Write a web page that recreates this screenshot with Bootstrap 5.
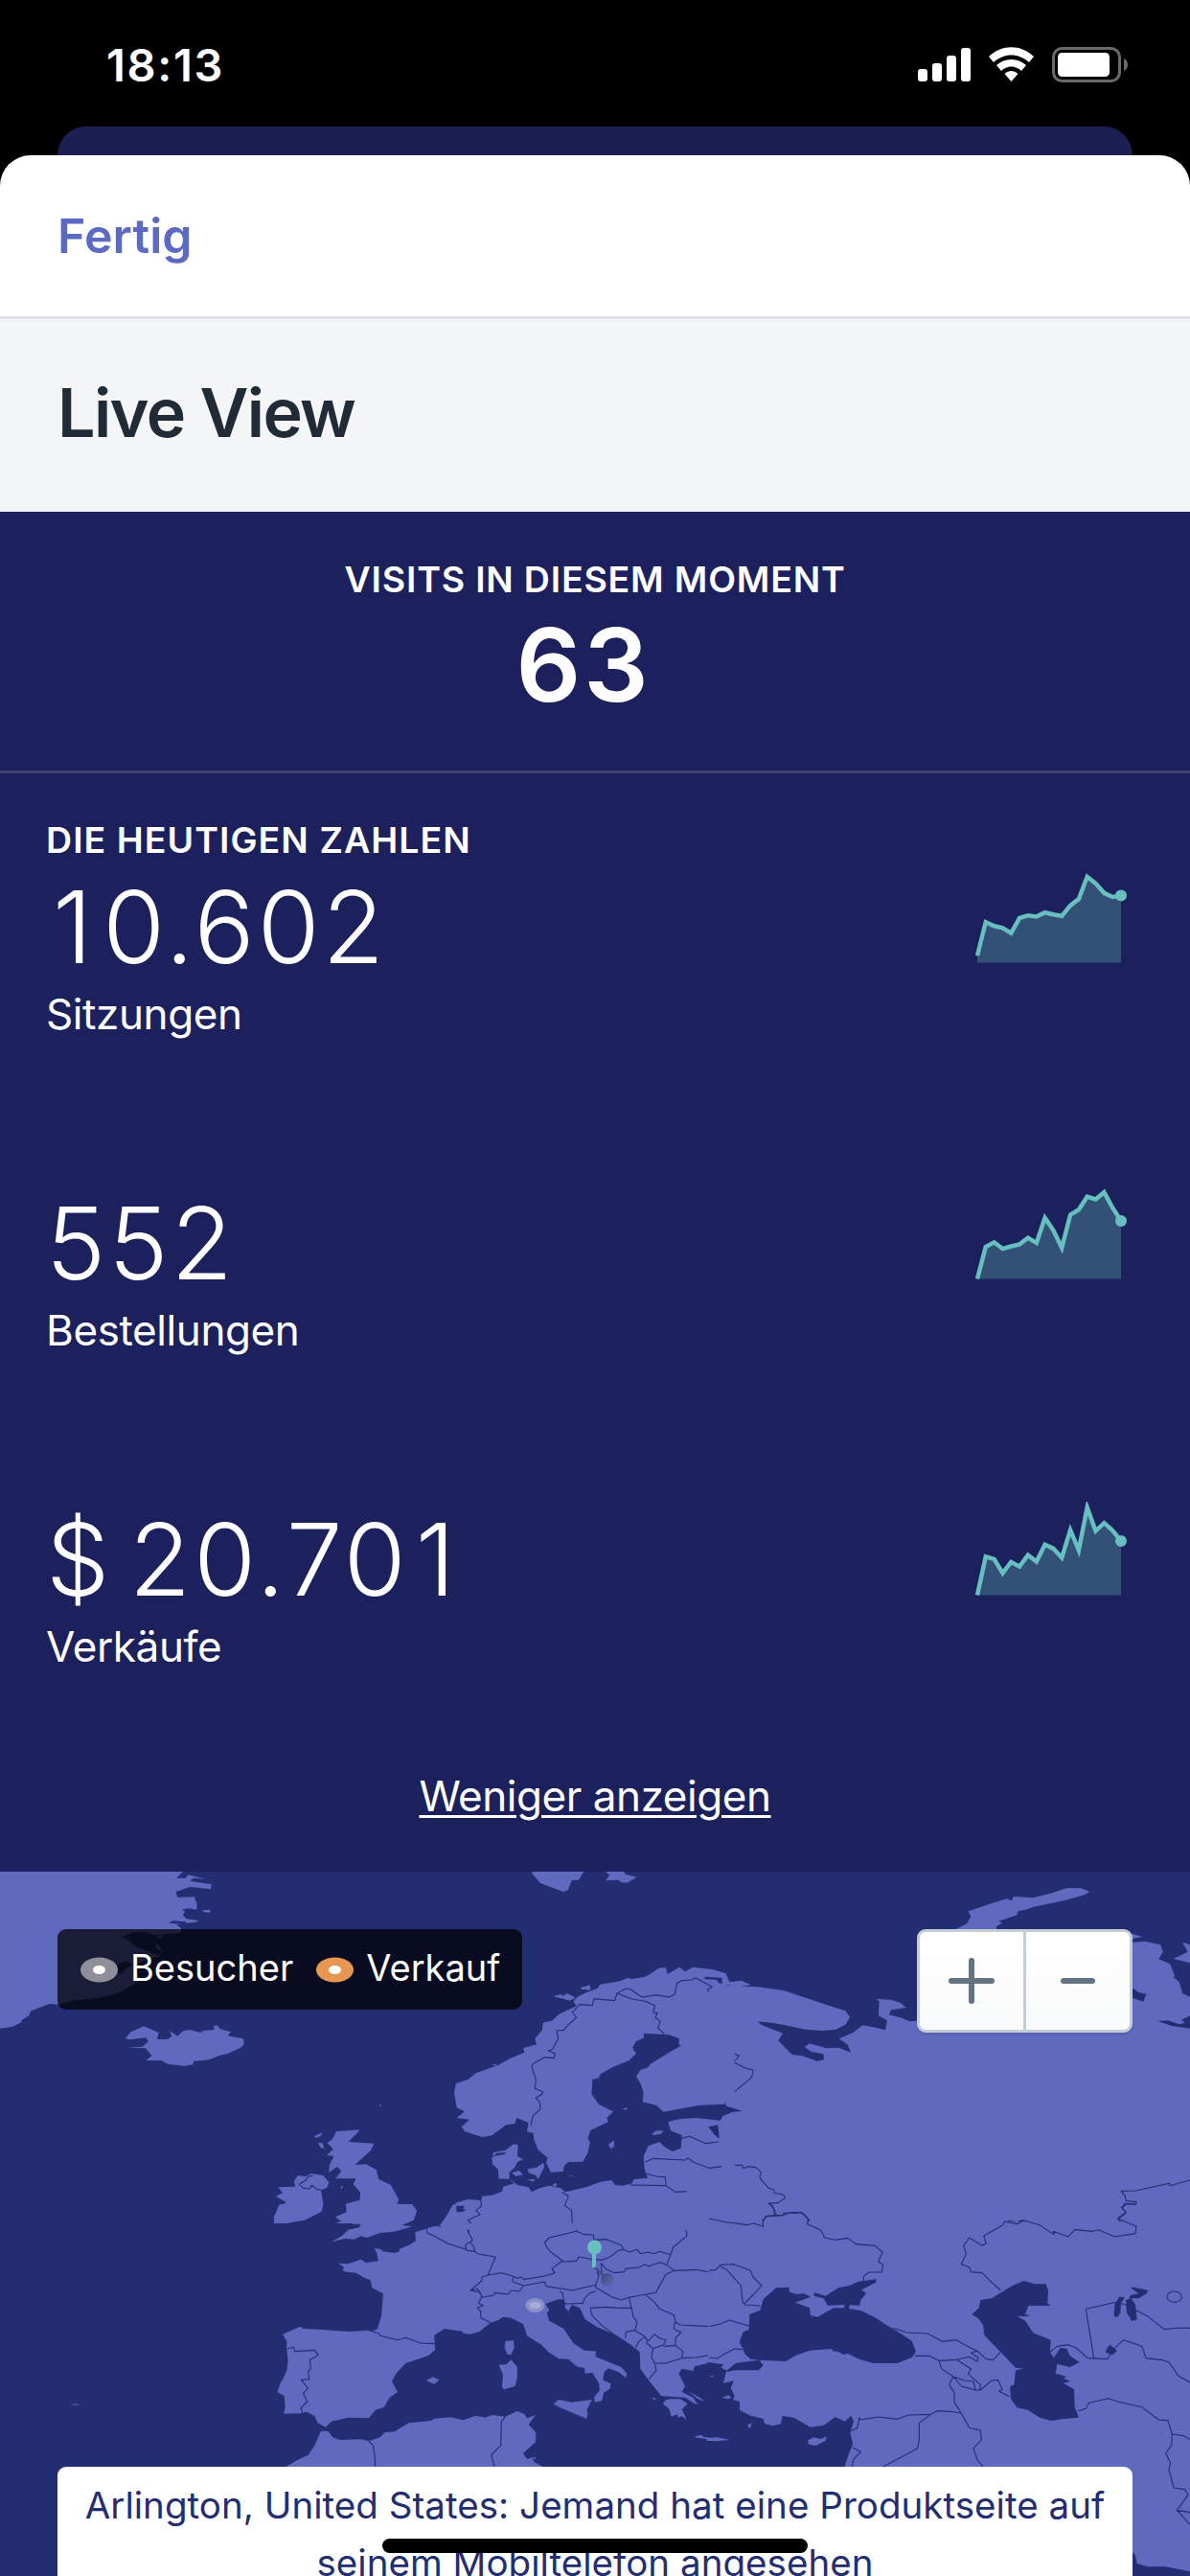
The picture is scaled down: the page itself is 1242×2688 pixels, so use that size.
<!DOCTYPE html>
<html lang="de">
<head>
<meta charset="utf-8">
<meta name="viewport" content="width=device-width, initial-scale=1">
<title>Live View</title>
<link href="https://cdn.jsdelivr.net/npm/bootstrap@5.3.0/dist/css/bootstrap.min.css" rel="stylesheet">
<style>
  body { font-family: Inter, "Liberation Sans", sans-serif; background: #000; overflow: hidden; }
  .screen { width: 1242px; height: 2688px; background: #000; }
  .status-bar { height: 132px; padding: 4px 55px 0 111px; font-size: 47px; font-weight: 600; line-height: 60px; letter-spacing: 1.7px; }
  .sheet-behind { height: 30px; margin: 0 60px; background: #1c1f52; border-radius: 30px 30px 0 0; }
  .sheet { border-radius: 32px 32px 0 0; background: #fff; }
  .sheet-nav { height: 171px; padding: 0 60px; border-bottom: 3px solid #dfe1e8; }
  .done-link { font-size: 50px; font-weight: 600; line-height: 60px; color: #5c6ac4; letter-spacing: .1px; }
  .page-head { height: 201px; padding: 0 60px 6px; background: #f4f5f7; }
  .page-head h1 { font-size: 70px; font-weight: 600; line-height: 84px; color: #212b36; letter-spacing: -1.65px; }
  .panel { background: #1c215d; color: #fff; }
  .now { height: 273px; padding-top: 47px; border-bottom: 3px solid #3e4272; }
  .overline { font-size: 37.5px; font-weight: 600; line-height: 48px; letter-spacing: .8px; }
  .today .overline { letter-spacing: 1.05px; }
  .now-count { font-size: 106px; font-weight: 600; line-height: 120px; letter-spacing: 3px; margin: 5px 24px 0 0; }
  .today { height: 1146px; padding: 46px 62px 0 48px; }
  .metric-list { padding-top: 6px; }
  .metric { height: 330px; }
  .metric:last-of-type { height: 181px; }
  .metric-value { font-size: 105px; font-weight: 300; line-height: 120px; letter-spacing: 3px; word-spacing: -15px; }
  .fig-one { margin: 0 8px 0 7px; }
  .metric-label { font-size: 44px; line-height: 60px; margin-top: 1px; letter-spacing: -.4px; }
  .spark { width: 170px; height: 110px; }
  .spark polygon { fill: #335177; }
  .spark polyline { fill: none; stroke: #67bfbf; stroke-width: 4.5; }
  .spark circle { fill: #67bfbf; }
  .less-link { font-size: 44px; line-height: 60px; margin: 96px 0 0 14px; color: #fff; letter-spacing: -.45px; text-underline-offset: 4px; text-decoration-thickness: 3px; }
  .live-map { height: 735px; background: #232e72; overflow: hidden; padding: 60px 60px 0; }
  .world { position: absolute; left: 0; top: 0; width: 1242px; height: 735px; }
  .world .land { fill: #5f69be; }
  .world .sea { fill: #232e72; }
  .world .border-line { fill: none; stroke: #232e72; stroke-width: 1.1; vector-effect: non-scaling-stroke; stroke-linejoin: round; }
  .map-legend { width: 485px; height: 84px; padding: 0 0 4px 24px; border-radius: 9px; background: rgba(0,0,0,.72); color: #fff; font-size: 38px; line-height: 48px; }
  .map-legend svg { width: 39px; height: 27px; margin-right: 13px; margin-top: 5px; }
  .zoom-group { width: 225px; height: 108px; border: 3px solid #c4cdd5; border-radius: 9px; background: linear-gradient(#fff, #f9fafb); box-shadow: 0 3px 2px rgba(22,29,37,.08); }
  .zoom-group button { background: none; border: 0; border-radius: 0; width: 108px; padding: 0; flex: 1; }
  .zoom-group button + button { border-left: 3px solid #c4cdd5; }
  .zoom-group svg { width: 48px; height: 48px; stroke: #637381; stroke-width: 6; stroke-linecap: round; }
  .event-toast { margin-top: 453px; height: 160px; border-radius: 9px; background: #fff; color: #232e72; font-size: 38.5px; line-height: 60px; padding-top: 10px; letter-spacing: .04px; }
  .home-bar { position: absolute; left: 399px; top: 696px; width: 444px; height: 15px; border-radius: 8px; background: #000; }
</style>
</head>
<body>
<main class="screen d-flex flex-column">
  <header class="status-bar d-flex align-items-center justify-content-between text-white">
    <span>18:13</span>
    <svg width="230" height="40" viewBox="957 48 230 40" aria-hidden="true">
      <g fill="#fff">
        <rect x="958" y="72" width="10" height="13" rx="3"/><rect x="973" y="66" width="10" height="19" rx="3"/><rect x="988" y="58" width="10" height="27" rx="3"/><rect x="1003" y="50" width="10" height="35" rx="3"/>
        <path d="M1032 59C1046 46 1065 46 1079 59L1074 65C1063 55 1048 55 1037 65ZM1040 68C1049 60 1062 60 1071 68L1066 74C1060 68 1051 68 1045 74ZM1048.500 77C1053 73 1058 73 1062.500 77L1055.500 85Z"/>
        <rect x="1104" y="55" width="54" height="25" rx="4.500"/>
      </g>
      <rect x="1099.500" y="50.500" width="69" height="34" rx="9" fill="none" stroke="#6a6a6a" stroke-width="3"/>
      <path d="M1173 61Q1177 63 1177 67.500T1173 74Z" fill="#6a6a6a"/>
    </svg>
  </header>
  <div class="sheet-behind"></div>

  <section class="sheet">
    <nav class="sheet-nav d-flex align-items-center"><a class="done-link text-decoration-none" href="#">Fertig</a></nav>
    <div class="page-head d-flex align-items-center"><h1 class="m-0">Live View</h1></div>
  </section>

  <section class="panel">
    <div class="now text-center">
      <div class="overline">VISITS IN DIESEM MOMENT</div>
      <div class="now-count">63</div>
    </div>
    <div class="today d-flex flex-column">
      <div class="overline">DIE HEUTIGEN ZAHLEN</div>
      <div class="metric-list d-flex flex-column">
        <div class="metric d-flex justify-content-between align-items-start">
          <div><div class="metric-value"><span class="fig-one">1</span>0.602</div><div class="metric-label">Sitzungen</div></div>
          <svg class="spark" viewBox="0 2.5 170 110"><polygon points="10,100 10,92.7 18.8,57.6 27.6,61.8 36.5,63.9 45.3,69.1 54.1,53.4 62.9,50.8 71.8,51.9 80.6,47.7 89.4,49.8 98.2,51.3 107.1,40.4 115.9,33.6 124.7,10.5 133.5,17.3 142.4,27.3 151.2,31.5 160,29.9 160,100"/><polyline points="10,92.7 18.8,57.6 27.6,61.8 36.5,63.9 45.3,69.1 54.1,53.4 62.9,50.8 71.8,51.9 80.6,47.7 89.4,49.8 98.2,51.3 107.1,40.4 115.9,33.6 124.7,10.5 133.5,17.3 142.4,27.3 151.2,31.5 160,29.9"/><circle cx="160" cy="29.9" r="6"/></svg>
        </div>
        <div class="metric d-flex justify-content-between align-items-start">
          <div><div class="metric-value">552</div><div class="metric-label">Bestellungen</div></div>
          <svg class="spark" viewBox="0 2.5 170 110"><polygon points="10,100 18.8,66.5 27.6,61.8 36.5,68.6 45.3,66 54.1,63.9 62.9,57.1 71.8,62.4 80.6,36.2 89.4,49.3 98.2,67.6 107.1,33.1 115.9,27.8 124.7,14.2 133.5,16.9 142.4,9.5 151.2,25.8 160,39.4 160,100"/><polyline points="10,100 18.8,66.5 27.6,61.8 36.5,68.6 45.3,66 54.1,63.9 62.9,57.1 71.8,62.4 80.6,36.2 89.4,49.3 98.2,67.6 107.1,33.1 115.9,27.8 124.7,14.2 133.5,16.9 142.4,9.5 151.2,25.8 160,39.4"/><circle cx="160" cy="39.4" r="6"/></svg>
        </div>
        <div class="metric d-flex justify-content-between align-items-start">
          <div><div class="metric-value">$ 20.70<span class="fig-one">1</span></div><div class="metric-label">Verkäufe</div></div>
          <svg class="spark" viewBox="0 2.5 170 110"><polygon points="10,100 18.8,59.8 27.6,62.4 36.5,77 45.3,65.5 54.1,70.2 62.9,58.2 71.8,65 80.6,47.2 89.4,51.4 98.2,60.8 107.1,32 115.9,53 124.7,8.5 133.5,33.1 142.4,24.7 151.2,32.6 160,43.6 160,100"/><polyline points="10,100 18.8,59.8 27.6,62.4 36.5,77 45.3,65.5 54.1,70.2 62.9,58.2 71.8,65 80.6,47.2 89.4,51.4 98.2,60.8 107.1,32 115.9,53 124.7,8.5 133.5,33.1 142.4,24.7 151.2,32.6 160,43.6"/><circle cx="160" cy="43.6" r="6"/></svg>
        </div>
      </div>
      <a class="less-link align-self-center" href="#">Weniger anzeigen</a>
    </div>
  </section>

  <section class="live-map position-relative">
    <svg class="world" viewBox="0 1953 1242 735" aria-hidden="true">
      <!-- North Atlantic: Greenland, Iceland, Faroe, Great Britain, Ireland -->
      <g transform="translate(0 1940) scale(.39605 .33333)">
        <path class="land" d="M0 30H490L465 59 487 60 497 49 540 62 510 59 500 68 558 79 555 94 500 87 463 102 468 119 512 118 519 140 518 158 498 154 479 158 487 163 482 176 492 187 523 192 515 198 490 200 455 206 425 209 450 190 477 216V230L436 234 410 260 430 290 418 304 350 330 370 380 310 420 262 434 200 441 150 455 130 453 82 475 76 490 57 504 56 511 33 524 0 530Z"/>
        <path class="land" d="M533 160L555 158 552 168 538 166ZM1400 42L1445 30 1540 35 1525 65 1507 66 1497 97 1484 102 1424 75ZM1460 430L1480 423 1483 429 1495 420 1517 434 1500 443 1485 437ZM1530 402L1555 394 1556 408 1533 408ZM1000 767L1007 772 1002 774Z"/>
        <path class="sea" d="M322 244L345 230 380 228 410 238 440 236 410 244 436 258 412 262 413 280 430 290 415 300 360 276 340 256ZM445 200L455 193 490 196 485 203ZM270 340L300 335 332 318 350 330 330 345 320 360 300 352 265 358Z"/>
        <path class="land" d="M330 561L345 541 379 523 418 543 414 564H441L453 555 447 537 468 554 482 538 499 534 530 543 534 537 565 534 563 522 573 520 580 532 609 541 600 553 641 562 643 580 634 590 599 610 584 613 550 628 510 633 509 643 486 647 444 642 424 630H385L400 615 384 592 334 590 375 587 391 570 384 559 343 565Z"/>
        <path class="land" d="M886 852L948 847 938 862 918 884 927 886 986 890 977 912 935 957 965 955 985 968 992 973 998 1002 1030 1020 1051 1066 1044 1088 1070 1081 1098 1098 1095 1115 1065 1140H885L915 1125 911 1079 948 1067 950 1043 931 1018 938 1000 884 1000 900 976 888 963 867 981 868 958 880 930 861 926 878 908 862 888 876 877ZM827 868L850 855 845 867 833 873ZM838 887L850 889 855 905 845 903ZM775 1007L785 990 805 993 820 984 852 990 867 1012 862 1028 846 1036 852 1080 847 1104 802 1130 755 1140H722L722 1118 753 1073 727 1055 745 1045 733 1027 778 1025ZM897 1026L905 1022 900 1033Z"/>
        <path class="border-line" d="M788 1018L806 1005 812 993 825 991M788 1018L800 1030 815 1032 822 1021 835 1034 846 1035"/>
      </g>
      <!-- Russia and the Arctic coast -->
      <g transform="translate(621 1940) scale(.39605 .33333)">
        <path class="land" d="M335 365L345 360 355 385 385 380 412 394 385 398 430 400 500 412 550 432 620 460 660 475 672 495 660 518 635 533 600 537 555 533 495 518 465 512 428 508 440 520 495 545 483 568 505 595 520 612 545 615 585 632 603 628 602 610 570 603 552 588 565 577 610 592 642 590 675 605 665 580 643 562 680 543 705 520 740 527 765 535 770 505 747 490 749 445 740 437 780 440 805 450 820 465 780 472 775 487 808 497 830 508 860 505 1100 420 1417 260 1450 257 1490 268 1497 290 1485 313 1515 328 1528 365 1524 370 1540 385 1548 420 1568 431V1160H335Z"/>
        <path class="land" d="M28 67L38 50 25 35 75 37 80 47 110 56 85 74 68 73 62 65ZM950 220L980 202 990 180 984 163 1052 136 1085 124 1098 130 1103 117 1155 121 1200 107 1245 90 1280 91 1304 102 1290 112 1240 128 1155 150 1135 158 1115 162 1112 175 1064 194 1073 200 1058 210V222ZM1415 233L1443 243 1415 249ZM1548 260L1568 268V325L1524 312 1562 290Z"/>
        <path class="sea" d="M1415 403L1435 418 1453 422 1445 446 1415 434ZM1483 507L1510 505 1540 517 1555 512 1545 503 1568 490V530L1520 522ZM335 763L344 762 346 773 388 788 360 793 330 808ZM299 836L322 828 329 850 335 866 322 874Z"/>
        <path class="border-line" d="M355 395L318 400 303 408 291 438 300 451 342 472 319 502 357 550 344 556 349 584 360 590 362 606 380 616 365 635 395 653 415 660 417 670 410 686 360 736 344 742 318 766M329 810L322 830 330 860 318 888 333 900 333 922 346 936 348 950 370 958 387 958 392 968 402 962 424 965 438 980 434 995 441 1008 458 1030 472 1035 472 1045 496 1050 502 1060 482 1076 457 1077 468 1085 478 1115 494 1115 498 1107 535 1108 545 1105 565 1130 555 1140M348 950L335 964 300 967 310 988 283 1000 272 1026 240 1041 215 1040 229 1075 228 1090 208 1108 225 1138 270 1122 300 1124 335 1134 400 1138M1568 1005L1515 1022 1513 1015 1425 1038 1387 1039 1397 1055 1400 1070 1427 1073 1425 1081 1397 1078 1388 1090 1400 1107 1378 1127 1390 1140M441 1140L450 1118 478 1115M1075 1138L1095 1132 1110 1138 1125 1130 1140 1140"/>
      </g>
      <!-- Western and southern Europe, North Africa -->
      <g transform="translate(240 2300) scale(.33333)">
        <path class="land" d="M700 0L690 15 665 62 620 75 580 88 582 115 560 128 530 140 531 148 515 153 480 148 470 140 452 138 460 155 465 178 425 183 410 173 370 187 340 185 357 198 352 208 365 212 395 215 420 230 440 238 445 262 480 280 474 350 462 390 445 400 430 395 375 399 340 397 280 392 230 390 220 383 205 390 165 407 178 430 177 450 182 490 178 520 165 550 158 560 148 588 170 600 173 635 168 656 220 655 240 650 265 663 275 685 300 698 318 680 370 668 435 670 455 645 482 635 500 605 525 588 507 555 520 530 550 498 620 475 642 457 640 410 672 390 728 398 730 404 750 407 780 400 815 372 840 363 855 353 880 356 918 375 930 412 975 440 1000 465 1030 484 1060 485 1085 508 1110 513 1112 530 1135 528 1155 560 1158 582 1140 605 1143 620 1165 615 1170 590 1190 578 1192 562 1168 550 1172 525 1185 514 1215 525 1240 543 1243 530 1225 510 1145 478 1145 460 1110 458 1075 435 1045 390 1000 365 992 340 1000 332 988 312 1030 297 1048 300 1050 325 1060 335 1070 315 1095 325 1112 360 1150 385 1210 410 1255 440 1283 462 1285 515 1310 550 1350 600 1385 603 1425 605 1455 625 1465 628 1450 605 1415 588 1425 570 1405 530 1415 515 1450 522 1455 508 1500 497V0ZM1365 613L1355 625 1375 640 1382 665 1400 658 1405 670 1413 663 1430 675 1415 642 1433 625 1410 610 1380 610ZM1435 585L1470 605 1486 617 1465 610ZM1322 605L1335 608 1328 614ZM1455 727L1478 722 1480 728 1500 730V735L1460 731Z"/>
        <path class="land" d="M155 0L137 42 150 55 170 60 235 38 275 25 292 0ZM368 0L365 25 330 40 345 52 375 50 385 62 410 62 405 73 370 80 350 100 318 118 360 108 390 110 410 100 430 105 470 90 500 88 520 85 570 70 538 66 575 50 585 20 570 0Z"/>
        <path class="land" d="M175 822L210 802 245 785 265 755 285 710 307 710 322 730 345 738 410 736 435 742 470 730 485 715 515 712 560 685 630 678 640 671 690 667 730 676 770 662 800 668 820 660 862 665 900 648 922 657 930 670 957 660 935 690 958 715 957 745 918 780 930 798 947 793 950 805 980 822ZM863 428L888 427 890 450 880 472 868 470 860 450ZM842 503L865 502 880 487 900 510 899 545 893 570 858 580 852 572 855 535ZM1013 625L1030 612 1070 620 1133 612 1117 645 1120 655 1117 672 1030 635ZM614 552L635 541 655 550 640 563ZM947 793L957 792 955 800Z"/>
        <path class="border-line" d="M177 453L200 448 203 461 265 457 277 472 250 488 253 515 245 522 248 548 223 550 244 576 230 592 242 618 222 638 227 652M448 400L467 405 470 412 525 425 550 418 598 435 640 437M615 75L618 90 640 100 680 122 735 140 743 145 767 148 775 155 832 166 825 180 808 222M645 67L665 70 707 62 742 77 750 95 760 112 752 120 765 135 765 148M748 118L737 130 740 142M742 77L748 92 745 50 780 42 772 20 782 12 788 0M808 222L850 215 885 225 900 232 912 228 920 236 985 225 1017 215 1008 202 1037 180 1045 180M808 222L790 228 788 240 753 270 775 265 790 292 825 285 830 278 872 282 880 270 905 273 920 255 885 243 887 228M753 270L782 275 790 292M920 255L985 243 990 257 1072 270 1145 253 1155 225 1150 215 1165 215 1162 185M788 292L778 310 793 317 775 325 785 335 785 355 817 372M1045 180L1005 150 995 140 985 120 1000 105 1085 85 1110 95 1138 96 1140 112 1180 110 1225 128 1232 142 1215 146 1190 165 1165 175 1130 172 1092 165 1085 178 1045 180M1048 0L1068 20 1068 40 1085 65 1085 85M1232 142L1250 150 1275 142 1285 155 1310 150 1330 155 1345 148 1380 158 1388 135 1430 100 1430 88 1410 55 1412 40 1390 28 1395 15 1412 12 1412 0M1410 55L1435 45 1500 43M1162 185L1180 205 1205 215 1235 212 1240 202 1280 198 1300 188 1310 195 1345 182 1367 190 1380 158M1367 190L1392 208 1460 205 1500 213M1392 208L1365 220 1340 265 1335 277 1250 292 1225 300 1195 290 1145 260 1145 253M1032 273L1042 278 1045 308 1055 312 1105 310 1110 295 1125 280 1145 272M1128 325L1175 322 1220 325 1258 325 1262 350 1275 370 1268 395 1240 400 1238 420M1128 325L1135 350 1165 380 1208 412M1250 292L1258 330M1302 284L1330 308 1345 328 1390 347 1395 370 1410 378 1500 383M1393 370L1390 390 1412 402 1395 420 1395 440M1268 395L1300 415 1280 430 1270 450M1300 415L1308 430 1330 407 1345 420 1365 425 1358 440 1325 452 1302 432M1325 452L1320 480 1330 498 1365 498 1415 482 1418 460 1395 442 1358 445M1330 498L1335 520 1312 548M1415 482L1460 480 1500 473M435 742L448 755 453 785 455 822M862 665L850 680 848 755 818 785 828 822"/>
      </g>
      <!-- Scandinavia and the Baltic -->
      <g transform="translate(460 2050) scale(.33333)">
        <path class="land" d="M920 70L870 58 865 48 825 45 828 38 885 42 895 28 850 15 790 8 765 22 748 8 710 30 705 10 685 10 655 30 640 38 600 45 585 42 560 52 500 62 490 75 455 88 430 100 415 115 425 130 370 155 350 175 320 182 318 205 295 232 300 250 258 262 262 275 215 295 180 315 110 340 85 360 48 372 42 400 50 448 75 460 50 480 90 485 65 508 75 522 130 540 160 535 205 502 232 498 238 480 275 495 270 522 290 528 292 548 305 580 335 605 330 620 345 650 383 648 388 628 400 618 445 617 460 590 468 555 460 545 470 518 525 492 520 480 540 460 495 438 472 405 475 360 495 355 500 343 540 320 590 300 612 278 600 260 612 240 635 230 637 215 715 220 747 232 745 248 752 254 715 275 655 312 650 322 625 330 612 350 625 372 635 400 632 430 675 440 697 461 810 440 888 437 900 425H920ZM355 98L375 94 380 100 398 92 420 102 400 112 385 105 358 101ZM437 76L467 68 465 80ZM160 314L175 311 172 317ZM568 452L585 447 582 455ZM660 530L675 520 698 520 690 530 668 534ZM525 563L542 550 543 570 532 577ZM402 660L418 662 405 663ZM350 690L360 683 365 690 355 696Z"/>
        <path class="land" d="M920 460L885 475 875 488 800 480 750 483 712 492 720 520 755 535 752 575 725 585 700 570 685 555 650 568 635 600 638 640 648 668 605 672 598 685 570 692 545 690 535 675 500 680 460 695 390 712 375 700 340 692 310 700 285 712 275 697 240 690 225 678 222 673 182 672 180 642 162 625 160 605 170 598 205 580 228 562 242 565 240 600 258 610 240 618 232 635 215 650 215 672 230 685 195 695 193 710 160 722 130 725 127 738 85 735 50 745 30 770 0 812V830H920ZM222 652L245 645 258 658 235 662ZM272 640L300 635 320 620 325 632 305 672 298 660 275 652ZM270 673L295 672 290 680ZM163 600L165 588 195 582 200 585Z"/>
        <path class="sea" d="M48 755L75 755 70 765 80 768 65 775 50 775ZM838 508L868 502 870 520 872 545 855 530ZM165 600L175 590 205 588 200 594ZM610 670L632 658 628 668Z"/>
        <path class="border-line" d="M282 505L288 475 312 452 310 430 298 418 318 405 320 398 295 388 298 360 285 320 290 310 325 290 355 293 358 278 337 270 350 265 368 230 363 207 385 205 398 190 425 165 412 150 435 125 475 128 480 107 545 113 552 90 580 75 595 78 630 102 675 95 715 102 733 92 740 58 755 50 785 48 798 42 850 70 835 78 840 85M552 90L600 108 640 115 670 128 666 150 678 152 672 165 688 178 680 198 700 218M750 545L780 538 830 560 870 555M640 618L665 607 765 612 775 606 790 618 840 637 880 632M645 655L675 663 703 665 705 692 592 690M705 692L735 712 770 710M182 672L222 674M380 712L400 725 388 755 410 770 412 810M125 738L128 755 110 770 123 782 85 800 95 810"/>
      </g>
      <!-- Black Sea, Caspian, Middle East -->
      <g transform="translate(740 2300) scale(.33333)">
        <path class="land" d="M-3 55H1510V1170H0V490H-3Z"/>
        <path class="sea" d="M-6 497L0 495 45 502 38 512 55 520 45 560 78 553 68 575 80 600 75 612 95 618 97 645 130 662 170 672 175 688 200 694 225 688 230 663 265 668 318 698 360 692 395 666 425 680 445 662 453 680 442 715 450 750 425 822V840H-6ZM50 525L85 497 145 490 160 488 130 485 112 468 105 450 95 432 107 400 125 393 127 345 160 332 170 298 210 262 250 260 252 275 275 282 297 280 318 290 270 308 315 325 318 348 340 353 390 325 422 325 425 315 372 317 358 295 328 287 330 277 365 287 405 262 440 255 465 243 525 235 522 245 478 268 492 280 475 300 472 317 440 316 438 327 475 333 520 355 550 375 605 408 635 428 648 462 635 480 590 498 515 498 470 485 435 468 420 470 405 462 388 460 385 453 315 458 270 475 240 492 158 488 170 505 155 520 85 520ZM823 345L845 325 850 300 885 295 950 255 985 240 1020 250 1055 250 1062 270 1060 310 1070 318 1000 318 990 345 1005 348 990 352 965 350 990 365 1015 403 1070 425 1068 465 1080 480 1100 450 1120 452 1130 475 1160 495 1130 510 1090 500 1085 530 1120 540 1110 545 1132 555 1110 560 1143 580 1145 635 1158 668 1110 672 1072 678 1035 668 1000 645 965 637 945 610 943 570 955 565 960 520 985 515 960 512 915 465 862 410 858 378 843 358ZM1268 350L1270 315 1285 290 1302 292 1290 310 1288 340 1278 355ZM1305 300L1322 295 1335 315 1340 362 1323 365 1308 340ZM1315 295L1320 285 1345 280 1320 262 1330 260 1375 270 1370 280 1345 295ZM1243 455L1255 440 1278 458 1265 472 1243 465ZM1320 1080L1335 1100 1340 1125 1375 1135 1430 1135 1506 1150V1170H1310Z"/>
        <path class="land" d="M-8 730L0 731 25 730 65 738 25 742 -8 740ZM308 740L328 730 350 735 368 727 365 740 335 756 313 752ZM120 692L135 685 128 703ZM40 605L62 598 70 605 60 610ZM0 538L15 537 12 542ZM425 822L440 775 455 760 470 800 450 822Z"/>
        <path class="border-line" d="M0 45L45 55 120 65 140 60 170 70 168 50 182 38 230 35 260 25 290 27 310 45 308 62 350 82 362 105 395 112 435 106 460 125 520 130 543 150 530 180 545 190 540 213 500 213 485 225 483 240M190 0L203 15 205 35M0 208L22 205 35 190 78 188 130 208 138 228 165 255 140 282 112 310M35 195L55 205 100 255 105 305 112 315 160 318M0 383L35 375 65 363 85 370 127 382M0 480L25 483 55 465 80 453 105 455M575 388L620 402 685 405 730 430 775 425 800 440 840 460 868 485 890 487 912 463M645 475L690 475 720 490 775 487 815 478 840 492 843 480 820 465 840 460M720 490L728 515 765 540 800 552 828 555 835 582 850 582 885 552 905 550 918 580 908 585 940 602M775 487L820 515 812 532 850 565 848 582M765 540L790 570 835 582M765 540L752 565 768 590 768 620 790 655 815 700 850 708 853 738 828 765 840 800 858 822M790 655L765 650 715 647 695 658 625 660 590 673 530 666 475 675 470 668 465 700 445 710M695 658L658 685 658 740 652 765 545 822M450 762L475 775 452 800 448 822M913 270L885 245 855 215 820 212 815 197 790 188 805 155 797 130 815 105 855 130 868 122 860 100 920 65 925 55 965 62 985 50 1035 65 1080 95 1078 85 1125 102 1145 80 1200 85 1220 80 1270 102 1335 92 1338 70 1280 45 1305 25 1293 12 1305 0H1338M1065 465L1090 445 1125 440 1150 450 1185 482 1248 485 1265 455 1298 425 1355 445 1368 482 1420 488 1440 495 1470 538 1506 558M1205 482L1180 328 1275 307 1305 315 1375 352 1425 392 1470 387 1506 388M1155 648L1180 640 1190 622 1250 608 1280 618 1355 635 1408 675 1437 677 1450 720 1448 755 1430 780 1445 810 1440 830 1455 888 1490 893 1500 910 1465 958 1506 1003M1450 720L1485 725 1506 735M1465 958L1506 965"/>
        <ellipse class="border-line" cx="1457" cy="290" rx="23" ry="17"/>
      </g>
      <path d="M75 2509h7" stroke="#5f69be" stroke-width="1"/>
      <!-- live markers -->
      <defs><linearGradient id="pinShadow" x1="0" y1="0" x2="1" y2="1"><stop offset="0" stop-color="#3f467c"/><stop offset="1" stop-color="#5f69be"/></linearGradient></defs>
      <path d="M621 2366L629 2374" stroke="#454c83" stroke-width="3"/><circle cx="634" cy="2379" r="7" fill="url(#pinShadow)"/>
      <path d="M620 2346V2366" stroke="#67bfbf" stroke-width="4"/><circle cx="620.500" cy="2345" r="7.500" fill="#67bfbf"/>
      <ellipse cx="558.500" cy="2405.500" rx="10" ry="7.500" fill="#8d92c5"/><ellipse cx="558.500" cy="2405.500" rx="6" ry="3.500" fill="#a7acd9"/>
    </svg>

    <div class="d-flex justify-content-between align-items-start position-relative">
      <div class="map-legend d-flex align-items-center">
        <svg viewBox="0 0 39 27"><ellipse cx="19.500" cy="13.500" rx="19.500" ry="13" fill="#8e8f9b"/><ellipse cx="19.500" cy="13.500" rx="6.500" ry="4.500" fill="#fff"/></svg><span>Besucher</span>
        <svg class="ms-4" viewBox="0 0 39 27"><ellipse cx="19.500" cy="13.500" rx="19.500" ry="13" fill="#e69752"/><ellipse cx="19.500" cy="13.500" rx="6.500" ry="4.500" fill="#fff"/></svg><span>Verkauf</span>
      </div>
      <div class="zoom-group d-flex">
        <button type="button" aria-label="Vergrößern"><svg viewBox="0 0 48 48"><path d="M3 24H45M24 3V45"/></svg></button>
        <button type="button" aria-label="Verkleinern"><svg viewBox="0 0 48 48"><path d="M9 24H39"/></svg></button>
      </div>
    </div>
    <div class="event-toast text-center position-relative">Arlington, United States: Jemand hat eine Produktseite auf<br>seinem Mobiltelefon angesehen</div>
    <div class="home-bar"></div>
  </section>
</main>
<script src="https://cdn.jsdelivr.net/npm/bootstrap@5.3.0/dist/js/bootstrap.bundle.min.js"></script>
</body>
</html>
